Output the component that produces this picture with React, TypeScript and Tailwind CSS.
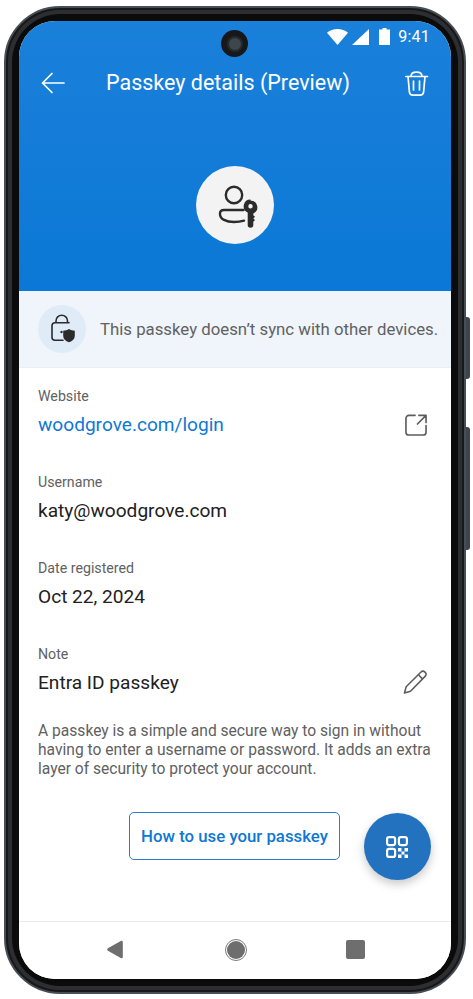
import React from "react";

function Label({ children }: { children: React.ReactNode }) {
  return <div className="text-[14.2px] leading-[20px] text-[#616161]">{children}</div>;
}

function Field({ label, value, link, icon, last }: { label: string; value: string; link?: boolean; icon?: React.ReactNode; last?: boolean }) {
  return (
    <div className={(last ? "h-[78px]" : "h-[86px]") + " pl-[19px] pr-[24px]"}>
      <Label>{label}</Label>
      <div className="mt-[5px] flex h-[27px] items-center justify-between">
        <span className={"text-[19.1px] leading-[27px] " + (link ? "text-[#0f78d4]" : "text-[#212121]")}>{value}</span>
        {icon}
      </div>
    </div>
  );
}

export default function App() {
  return (
    <div className="relative h-[999px] w-[473px] overflow-hidden bg-white font-['Roboto',sans-serif]">
      {/* side buttons */}
      <div className="absolute left-[462px] top-[317px] h-[62px] w-[8px] rounded-r-[3px] bg-[#3d444d]" />
      <div className="absolute left-[462px] top-[427px] h-[123px] w-[8px] rounded-r-[3px] bg-[#3d444d]" />
      {/* device */}
      <div className="relative ml-[4px] mt-[6px] h-[988px] w-[462px] rounded-[56px] border-[2px] border-[#484e55] bg-[#0b0b0c] p-[13px] shadow-[inset_0_0_0_2px_#17181a,inset_0_0_0_6px_#2c2e31]">
        <div className="flex h-[958px] w-[432px] flex-col overflow-hidden rounded-[36px] bg-white shadow-[0_0_0_4px_#0b0b0c]">
          {/* header */}
          <div className="relative h-[270px] shrink-0 bg-gradient-to-b from-[#1a80da] to-[#0a78d6]">
            <div className="flex h-[30px] items-center justify-end gap-[5px] pr-[21px] pt-[1px] text-white">
              <svg width="21" height="16" viewBox="0 0 22 15" preserveAspectRatio="none" className="mr-[-2px]"><path d="M0 3.500C3 1.200 7 0 11 0s8 1.200 11 3.500L11 15z" fill="#fff" /></svg>
              <svg width="17" height="16" viewBox="0 0 17 16" className="ml-[1px]"><path d="M17 0v16H0z" fill="#fff" /></svg>
              <svg width="11" height="17" viewBox="0 0 11 16" preserveAspectRatio="none" className="ml-[5px]"><path d="M3.500 0h4v1.500H11V16H0V1.500h3.500z" fill="#fff" /></svg>
              <span className="ml-[3px] text-[16px] leading-[20px] tracking-[0.2px]">9:41</span>
            </div>
            <div className="mt-[4px] flex h-[56px] items-center pl-[22px] pr-[22px] text-white">
              <svg width="24" height="22" viewBox="0 0 24 22" fill="none" stroke="#fff" strokeWidth="1.700" strokeLinecap="round" strokeLinejoin="round"><path d="M1.500 11H23M11 1.500 1.500 11l9.500 9.500" /></svg>
              <span className="ml-[41px] text-[21.5px] leading-[28px]">Passkey details (Preview)</span>
              <svg width="24" height="26" viewBox="405 70 24 26" fill="none" stroke="#fff" strokeWidth="1.700" strokeLinecap="round" strokeLinejoin="round" className="ml-auto">
                <path d="M405.800 76.500H427.500M411 76.500c0-3 2-4.300 5.500-4.300s5.500 1.300 5.500 4.300M408 76.500l1.400 15.500c.2 2 1.600 3.200 3.600 3.200h7c2 0 3.400-1.200 3.600-3.200L425 76.500M413.500 81v9M419.500 81v9" />
              </svg>
            </div>
            <div className="mt-[55px] flex justify-center">
              <div className="h-[78px] w-[78px] rounded-full bg-[#f3f3f3]">
                <svg width="78" height="78" viewBox="196 166 78 78" fill="none">
                  <circle cx="234" cy="195" r="8.200" stroke="#2b2b2b" strokeWidth="2.400" />
                  <path d="M243.500 210h-19.500c-2.700 0-4 1.700-4 3.600v.6c0 4.800 6 7.800 14 7.800 3.500 0 6.500-.3 10-1.300" stroke="#2b2b2b" strokeWidth="2.400" strokeLinecap="round" />
                  <path fillRule="evenodd" d="M250.500 200.500a6.800 6.800 0 0 1 2.800 13v1.800l1.700 1.500-1.700 1.700 1.700 1.500-1.700 1.700v3.300a2.800 2.800 0 0 1-5.600 0v-12.500a6.800 6.800 0 0 1 2.800-13zm0 3.500a2.200 2.200 0 1 0 0 4.400 2.200 2.200 0 0 0 0-4.400z" fill="#2b2b2b" />
                </svg>
              </div>
            </div>
            {/* camera */}
            <div className="absolute left-[202px] top-[9px] flex h-[27px] w-[27px] items-center justify-center rounded-full bg-[#17181a]">
              <div className="h-[12px] w-[12px] rounded-full bg-[#3c464c] ring-[2px] ring-[#26292c]" />
            </div>
          </div>

          {/* notice */}
          <div className="flex h-[77px] shrink-0 items-center gap-[14px] border-b border-[#e8eff7] bg-[#eff5fb] pl-[19px]">
            <div className="h-[48px] w-[48px] shrink-0 rounded-full bg-[#dfecf7]">
              <svg width="48" height="48" viewBox="38 305 48 48" fill="none">
                <path d="M69 322.700H55a3 3 0 0 0-3 3v11.600a3 3 0 0 0 3 3h8" stroke="#2b2b2b" strokeWidth="1.600" strokeLinecap="round" />
                <path d="M56 322.500V321a5.500 5.500 0 0 1 11.500 0v2" stroke="#2b2b2b" strokeWidth="1.600" />
                <circle cx="61.500" cy="332" r="1.200" fill="#2b2b2b" />
                <path d="M69 329c1.700 1.100 3.600 1.600 5.800 1.700v5c0 3.100-2.200 5.300-5.800 6.500-3.600-1.200-5.800-3.400-5.800-6.500v-5c2.200-.1 4.100-.6 5.800-1.700z" fill="#2b2b2b" />
              </svg>
            </div>
            <span className="whitespace-nowrap text-[16.8px] leading-[24px] text-[#616161]">This passkey doesn’t sync with other devices.</span>
          </div>

          {/* fields */}
          <div className="relative flex-1">
            <div className="pt-[18px]">
              <Field
                label="Website"
                value="woodgrove.com/login"
                link
                icon={
                  <svg width="22" height="22" viewBox="0 0 23 23" fill="none" stroke="#5c5c5c" strokeWidth="1.700" strokeLinecap="round" strokeLinejoin="round">
                    <path d="M10.500 1.500H4A3 3 0 0 0 1 4.500v14.500a3 3 0 0 0 3 3h15a3 3 0 0 0 3-3v-7" />
                    <path d="M14.500 1.500H22v7.500M22 1.500l-9 9" />
                  </svg>
                }
              />
              <Field label="Username" value="katy@woodgrove.com" />
              <Field label="Date registered" value="Oct 22, 2024" />
              <Field
                label="Note"
                last
                value="Entra ID passkey"
                icon={
                  <svg width="24" height="25" viewBox="0 0 25 25" fill="none" stroke="#5c5c5c" strokeWidth="1.600" strokeLinejoin="round">
                    <path d="M1.500 23.500l1.800-6.500L18.500 1.800a3 3 0 0 1 4.500 4.300L7.800 21.700z" />
                    <path d="M16 4.500l4.500 4.500" />
                  </svg>
                }
              />
            </div>
            <p className="px-[19px] text-[15.6px] leading-[19px] text-[#616161]">
              A passkey is a simple and secure way to sign in without having to enter a username or password. It adds an extra layer of security to protect your account.
            </p>
            <div className="absolute left-[110px] top-[444px] flex h-[48px] w-[211px] items-center justify-center rounded-[5px] border-[1.5px] border-[#2a7cc7] pt-[1px] text-[16.8px] font-medium text-[#0f78d4]">
              How to use your passkey
            </div>
            <div className="absolute left-[345px] top-[445px] flex h-[67px] w-[67px] items-center justify-center rounded-full bg-[#2272bf] shadow-[0_4px_10px_rgba(0,0,0,0.22)]">
              <svg width="22" height="22" viewBox="0 0 22 22" fill="none" className="ml-[-1px] mt-[1px]">
                <rect x="1.100" y="1.100" width="8" height="8" rx="2" stroke="#fff" strokeWidth="2.200" />
                <rect x="12.900" y="1.100" width="8" height="8" rx="2" stroke="#fff" strokeWidth="2.200" />
                <rect x="1.100" y="12.900" width="8" height="8" rx="2" stroke="#fff" strokeWidth="2.200" />
                <path d="M12 12h3.500v3.500H12zM18.500 12H22v3.500h-3.500zM15.500 15.500h3v3h-3zM12 18.500h3.500V22H12zM18.500 18.500H22V22h-3.500z" fill="#fff" />
              </svg>
            </div>
          </div>

          {/* nav bar */}
          <div className="flex h-[58px] shrink-0 items-center border-t border-[#ececec] bg-white pb-[2px]">
            <div className="flex w-full items-center justify-between pl-[88px] pr-[86px]">
              <svg width="16" height="19" viewBox="0 0 18 20" preserveAspectRatio="none"><path d="M16 .8a1.500 1.500 0 0 1 1.800 1.400v15.600a1.500 1.500 0 0 1-1.800 1.400L1 11.200a1.400 1.400 0 0 1 0-2.400z" fill="#6e6e6e" /></svg>
              <div className="ml-[3px] flex h-[22px] w-[22px] items-center justify-center rounded-full border border-[#7a7a7a]">
                <div className="h-[18px] w-[18px] rounded-full bg-[#6e6e6e]" />
              </div>
              <div className="h-[19px] w-[19px] rounded-[2px] bg-[#6e6e6e]" />
            </div>
          </div>
        </div>
      </div>
    </div>
  );
}
